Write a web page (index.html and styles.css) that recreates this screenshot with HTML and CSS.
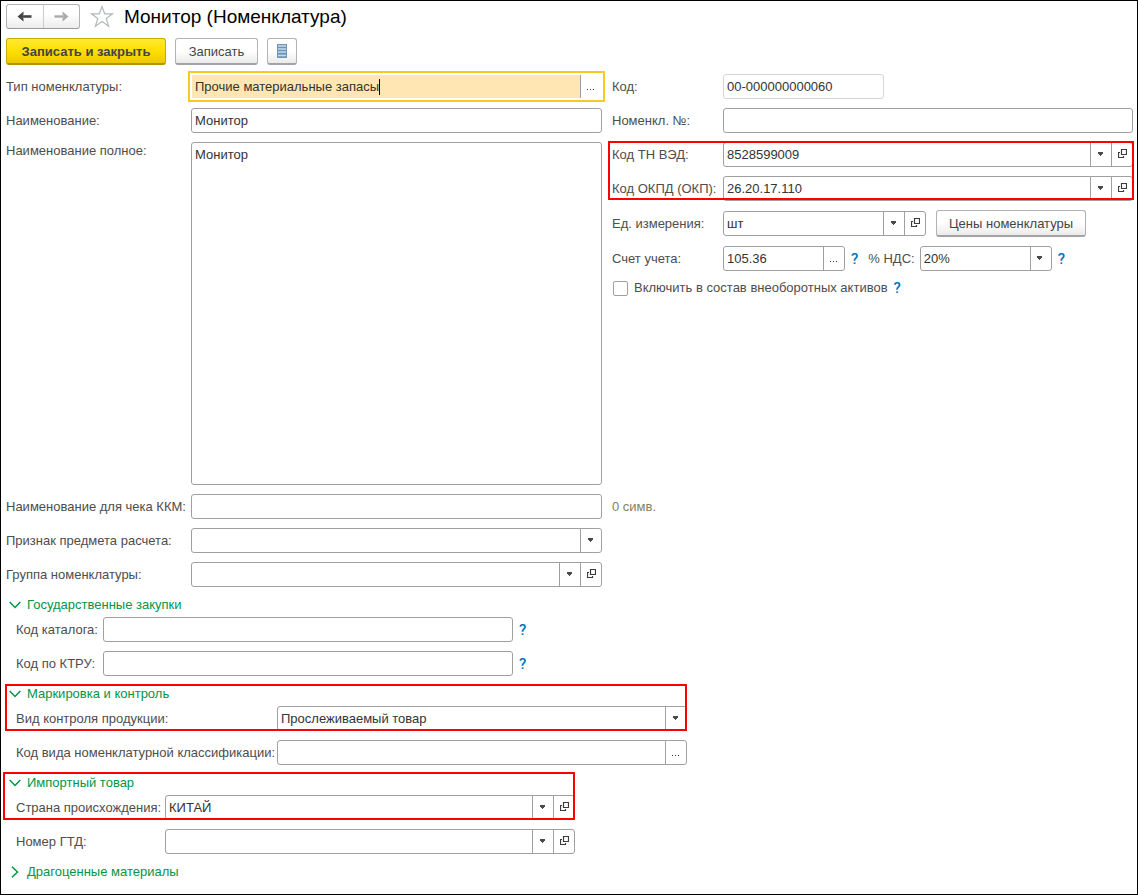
FILE: index.html
```html
<!DOCTYPE html>
<html lang="ru">
<head>
<meta charset="utf-8">
<title>Монитор (Номенклатура)</title>
<link rel="stylesheet" href="styles.css">
</head>
<body>
<svg class="sprite" aria-hidden="true">
  <symbol id="down" viewBox="0 0 7 6"><path d="M0 0h5v2h-5zM1 2h3v1h-3zM2 3h1v1h-1z" fill="#4a4a4a"/></symbol>
  <symbol id="open" viewBox="0 0 9 11"><path d="M3.500.5h5v5h-5zM2 3.500H.5v5h5V7" fill="none" stroke="#3c3c3c" stroke-width="1.200"/></symbol>
  <symbol id="dots" viewBox="0 0 8 8"><path d="M0 6h1v1H0zM3 6h1v1H3zM6 6h1v1H6z" fill="#333"/></symbol>
  <symbol id="chevron" viewBox="0 0 12 8"><path d="M.7 1l5.300 5.500L11.300 1" fill="none" stroke="#009646" stroke-width="1.500"/></symbol>
</svg>
<main class="window">
  <header class="titlebar">
    <div class="nav">
      <button type="button" aria-label="Назад"><svg width="15" height="11" viewBox="0 0 15 11"><path d="M3 5.500h11.500" fill="none" stroke="#444" stroke-width="2.600"/><path d="M6.500.5v3L4.200 5.500l2.300 2v3L.5 5.500z" fill="#444"/></svg></button>
      <button type="button" aria-label="Вперед"><svg width="15" height="11" viewBox="0 0 15 11"><path d="M.5 5.500H12" fill="none" stroke="#aaa" stroke-width="2.400"/><path d="M8.500.5v3l2.300 2-2.300 2v3l6-5z" fill="#aaa"/></svg></button>
    </div>
    <button type="button" class="star" aria-label="В избранное"><svg width="24" height="23" viewBox="0 0 24 23"><path d="M12 1.500l2.700 7.300h7.800l-6.300 4.700 2.400 7.800L12 16.600l-6.600 4.700 2.400-7.800L1.500 8.800h7.800z" fill="#fff" stroke="#b4b8bc" stroke-width="1.200"/></svg></button>
    <h1>Монитор (Номенклатура)</h1>
  </header>
  <div class="toolbar">
    <button type="button" class="btn primary">Записать и закрыть</button>
    <button type="button" class="btn">Записать</button>
    <button type="button" class="btn icon" aria-label="Список"><svg width="10" height="14" viewBox="0 0 10 14"><path d="M0 0h10v14H0z" fill="#6f97b5"/><path d="M1 2h8M1 5h8M1 8h8M1 11.500h8" stroke="#c3dcec" stroke-width="1.500"/></svg></button>
  </div>
  <form class="form">
    <div class="columns grow">
      <div class="stack">
        <div class="row main"><label for="type">Тип номенклатуры:</label>
          <div class="field active"><div class="entry"><input id="type" value="Прочие материальные запасы"><span class="caret"></span></div><button type="button" aria-label="Выбрать"><svg width="8" height="8"><use href="#dots"/></svg></button></div></div>
        <div class="row main"><label for="name">Наименование:</label><div class="field"><input id="name" value="Монитор"></div></div>
        <div class="row main tall"><label for="full">Наименование полное:</label><textarea id="full">Монитор</textarea></div>
      </div>
      <div class="stack">
        <div class="row side"><label for="code">Код:</label><div class="field readonly"><input id="code" value="00-000000000060" readonly></div></div>
        <div class="row side"><label for="num">Номенкл. №:</label><div class="field"><input id="num"></div></div>
        <div class="stack marked codes">
          <div class="row side"><label for="tnved">Код ТН ВЭД:</label><div class="field"><input id="tnved" value="8528599009"><button type="button" aria-label="Список"><svg width="7" height="6"><use href="#down"/></svg></button><button type="button" aria-label="Открыть"><svg width="9" height="11"><use href="#open"/></svg></button></div></div>
          <div class="row side"><label for="okpd">Код ОКПД (ОКП):</label><div class="field"><input id="okpd" value="26.20.17.110"><button type="button" aria-label="Список"><svg width="7" height="6"><use href="#down"/></svg></button><button type="button" aria-label="Открыть"><svg width="9" height="11"><use href="#open"/></svg></button></div></div>
        </div>
        <div class="stack units">
          <div class="row side"><label for="unit">Ед. измерения:</label><div class="line"><div class="field unit"><input id="unit" value="шт"><button type="button" aria-label="Список"><svg width="7" height="6"><use href="#down"/></svg></button><button type="button" aria-label="Открыть"><svg width="9" height="11"><use href="#open"/></svg></button></div><button type="button" class="btn prices">Цены номенклатуры</button></div></div>
          <div class="row side"><label for="acc">Счет учета:</label><div class="line"><div class="field account"><input id="acc" value="105.36"><button type="button" aria-label="Выбрать"><svg width="8" height="8"><use href="#dots"/></svg></button></div><a href="#help" class="help">?</a><label for="vat" class="vat-label">% НДС:</label><div class="field vat"><select id="vat"><option>20%</option></select><span class="mark"><svg width="7" height="6"><use href="#down"/></svg></span></div><a href="#help" class="help">?</a></div></div>
        </div>
        <div class="check"><input type="checkbox" id="incl"><label for="incl">Включить в состав внеоборотных активов</label><a href="#help" class="help">?</a></div>
      </div>
    </div>
    <div class="columns">
      <div class="stack">
        <div class="row main"><label for="kkm">Наименование для чека ККМ:</label><div class="field"><input id="kkm"></div></div>
        <div class="row main"><label for="sign">Признак предмета расчета:</label><div class="field"><select id="sign"><option></option></select><span class="mark"><svg width="7" height="6"><use href="#down"/></svg></span></div></div>
        <div class="row main"><label for="group">Группа номенклатуры:</label><div class="field"><input id="group"><button type="button" aria-label="Список"><svg width="7" height="6"><use href="#down"/></svg></button><button type="button" aria-label="Открыть"><svg width="9" height="11"><use href="#open"/></svg></button></div></div>
      </div>
      <div class="count">0 симв.</div>
    </div>
    <section>
      <button type="button" class="section-title"><svg width="12" height="8"><use href="#chevron"/></svg>Государственные закупки</button>
      <div class="stack body">
        <div class="row catalog"><label for="cat">Код каталога:</label><div class="field"><input id="cat"></div><a href="#help" class="help">?</a></div>
        <div class="row catalog"><label for="ktru">Код по КТРУ:</label><div class="field"><input id="ktru"></div><a href="#help" class="help">?</a></div>
      </div>
    </section>
    <section>
      <div class="marked control">
        <button type="button" class="section-title"><svg width="12" height="8"><use href="#chevron"/></svg>Маркировка и контроль</button>
        <div class="row class body"><label for="kind">Вид контроля продукции:</label><div class="field"><select id="kind"><option>Прослеживаемый товар</option></select><span class="mark"><svg width="7" height="6"><use href="#down"/></svg></span></div></div>
      </div>
      <div class="row class body next"><label for="klass">Код вида номенклатурной классификации:</label><div class="field"><input id="klass"><button type="button" aria-label="Выбрать"><svg width="8" height="8"><use href="#dots"/></svg></button></div></div>
    </section>
    <section>
      <div class="marked import">
        <button type="button" class="section-title"><svg width="12" height="8"><use href="#chevron"/></svg>Импортный товар</button>
        <div class="row origin body"><label for="country">Страна происхождения:</label><div class="field"><input id="country" value="КИТАЙ"><button type="button" aria-label="Список"><svg width="7" height="6"><use href="#down"/></svg></button><button type="button" aria-label="Открыть"><svg width="9" height="11"><use href="#open"/></svg></button></div></div>
      </div>
      <div class="row origin body next"><label for="gtd">Номер ГТД:</label><div class="field"><input id="gtd"><button type="button" aria-label="Список"><svg width="7" height="6"><use href="#down"/></svg></button><button type="button" aria-label="Открыть"><svg width="9" height="11"><use href="#open"/></svg></button></div></div>
    </section>
    <button type="button" class="section-title closed"><svg width="12" height="12" viewBox="0 0 12 12"><path d="M3 .7L8.500 6 3 11.300" fill="none" stroke="#009646" stroke-width="1.500"/></svg>Драгоценные материалы</button>
  </form>
</main>
</body>
</html>
```
FILE: styles.css
```css
*, *::before, *::after { box-sizing: border-box; }
body { margin: 0; background: #fff; color: #4d4d4d; font: 13px/16px "Liberation Sans", Arial, sans-serif; }
button, input, select, textarea { font: inherit; color: inherit; margin: 0; padding: 0; border: 0; background: none; outline: 0; border-radius: 0; }
svg { display: block; flex: none; }
.sprite { position: absolute; width: 0; height: 0; }
.window { min-height: 100vh; border: 1px solid #000; padding: 3px 4px 10px 5px; display: flex; flex-direction: column; }

.titlebar { display: flex; align-items: center; height: 25px; }
.nav { display: flex; width: 74px; height: 25px; border: 1px solid #b3b3b3; border-bottom-color: #999; border-radius: 3px; background: linear-gradient(#fff 40%, #ececec); }
.nav button { flex: 1; display: flex; align-items: center; justify-content: center; }
.nav button + button { border-left: 1px solid #ccc; }
.star { margin-left: 10px; }
h1 { margin: 0 0 0 10px; font-size: 19px; line-height: 24px; font-weight: 400; color: #000; }

.toolbar { display: flex; gap: 9px; margin-top: 9px; }
.btn { height: 27px; padding: 1px 12px 0; border: 1px solid #b3b3b3; border-bottom: 2px solid #a3a3a3; border-radius: 3px; background: linear-gradient(#fff 50%, #ebebeb); color: #444; white-space: nowrap; }
.toolbar .btn { min-width: 83px; }
.toolbar .primary { min-width: 160px; font-weight: 700; border-color: #c9aa00; border-bottom-color: #b09500; background: linear-gradient(#ffe933, #ffdf00 50%, #edc900); }
.toolbar .icon { min-width: 30px; padding: 0; display: flex; align-items: center; justify-content: center; }

.form { flex: 1; display: flex; flex-direction: column; margin-top: 9px; }
.columns { display: grid; grid-template-columns: 596fr 521fr; column-gap: 10px; }
.columns + .columns { margin-top: 9px; }
.columns.grow { flex: 1; }
.stack { display: flex; flex-direction: column; gap: 9px; }
.row { display: grid; align-items: center; min-height: 25px; }
.row > label { white-space: nowrap; }
.row.main { grid-template-columns: 185px 1fr; }
.row.side { grid-template-columns: 111px 1fr; }
.row.catalog { grid-template-columns: 87px 410px auto; justify-content: start; }
.row.class { grid-template-columns: 261px 410px; }
.row.origin { grid-template-columns: 149px 410px; }
.row.tall { flex: 1; align-items: stretch; min-height: 200px; }
.tall label { padding-top: 1px; }
textarea { width: 100%; height: 100%; resize: none; border: 1px solid #a0a0a0; border-radius: 3px; padding: 4px 3px; color: #333; }

.field { display: flex; height: 25px; min-width: 0; border: 1px solid #a0a0a0; border-radius: 3px; background: #fff; color: #333; }
.field input, .field select { flex: 1; min-width: 0; padding: 0 3px; }
.field select { appearance: none; margin-right: -21px; padding-right: 24px; }
.field button, .mark { flex: none; width: 21px; display: flex; align-items: center; justify-content: center; border-left: 1px solid #a0a0a0; }
.mark { pointer-events: none; }
.field.active { border-color: transparent; border-radius: 0; outline: 2px solid #f8c920; outline-offset: 1px; }
.entry { flex: 1; display: flex; align-items: center; background: #ffe6b3; }
.field .entry input { flex: none; field-sizing: content; padding-right: 0; }
.caret { width: 1px; height: 16px; background: #000; }
.field.readonly { width: 161px; border-color: #d6d6d6; }
.units { gap: 10px; margin-top: 1px; }
.line { display: flex; align-items: center; height: 25px; }
.unit { width: 203px; }
.prices { margin-left: 10px; }
.account { width: 122px; }
.vat { width: 132px; }
.vat-label { margin: 0 5px 0 10px; }
.help { margin-left: 6px; color: #0072bc; text-decoration: none; font: 500 15px/16px Roboto, sans-serif; }
.check { display: flex; align-items: center; height: 16px; }
.check input { appearance: none; width: 15px; height: 15px; margin: 0 6px 0 1px; border: 1px solid #a0a0a0; border-radius: 2px; }
.count { line-height: 25px; color: #87805a; }

.section-title { display: flex; align-items: center; gap: 6px; height: 30px; padding: 6px 0 0 3px; color: #009646; }
.body { margin-left: 10px; }
.next { margin-top: 9px; }
.marked { position: relative; width: fit-content; }
.marked::after { content: ""; position: absolute; border: 2px solid #f00; pointer-events: none; }
.codes { width: auto; }
.codes::after { inset: -1px -1px 1px -4px; }
.control::after { inset: 8px 0 0 -1px; }
.import::after { inset: 7px 0 0 -3px; }
.closed { align-self: flex-start; }
```
